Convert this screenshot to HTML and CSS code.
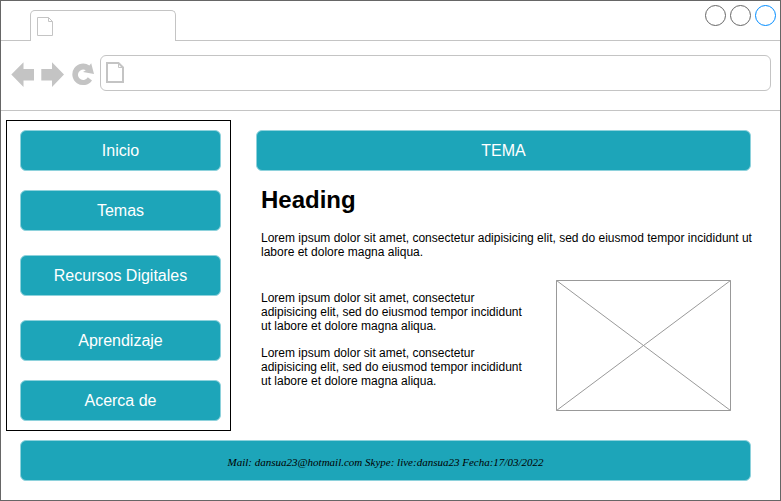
FILE: index.html
```html
<!DOCTYPE html>
<html lang="es">
<head>
<meta charset="utf-8">
<meta name="viewport" content="width=device-width, initial-scale=1">
<title>Tema</title>
<link rel="stylesheet" href="styles.css">
</head>
<body>
<div class="window">
  <header class="tab-strip">
    <div class="tab">
      <svg class="doc-icon" width="16" height="19" viewBox="0 0 16 19" aria-hidden="true">
        <path d="M.5.5H11.500L15.500 4.500V18.500H.5ZM11.500.5V4.500H15.500"/>
      </svg>
    </div>
    <div class="window-controls">
      <button class="control" type="button" aria-label="Minimizar"></button>
      <button class="control" type="button" aria-label="Maximizar"></button>
      <button class="control control-close" type="button" aria-label="Cerrar"></button>
    </div>
  </header>

  <div class="toolbar">
    <button class="tool" type="button" aria-label="Atrás">
      <svg width="24" height="26" viewBox="0 0 24 26" aria-hidden="true"><path d="M.3 12.500 12.500.3V7H23V18.500H12.500V25Z"/></svg>
    </button>
    <button class="tool" type="button" aria-label="Adelante">
      <svg width="24" height="26" viewBox="0 0 24 26" aria-hidden="true"><path d="M23 12.500 11 .3V7H.3V18.500H11V25Z"/></svg>
    </button>
    <button class="tool" type="button" aria-label="Recargar">
      <svg width="24" height="26" viewBox="0 0 24 26" aria-hidden="true"><path d="M21 18.500A10.800 10.800 0 1 1 18.400 3.500L20.200 1.300 23 11.900 12 10 14.800 8.300A5.200 5.200 0 1 0 16.800 15.200Z"/></svg>
    </button>
    <label class="address">
      <svg class="doc-icon" width="18" height="21" viewBox="0 0 18 21" aria-hidden="true">
        <path stroke-width="2" d="M1 1H12.500L17 5.500V20H1Z"/>
        <path d="M12.500 1V5.500H17"/>
      </svg>
      <input class="address-input" type="text" aria-label="Dirección">
    </label>
  </div>

  <div class="page">
    <nav class="menu">
      <a class="bar" href="#inicio">Inicio</a>
      <a class="bar" href="#temas">Temas</a>
      <a class="bar bar-spaced" href="#recursos">Recursos Digitales</a>
      <a class="bar" href="#aprendizaje">Aprendizaje</a>
      <a class="bar" href="#acerca">Acerca de</a>
    </nav>
    <main class="content">
      <div class="bar topic">TEMA</div>
      <h1 class="heading">Heading</h1>
      <p class="text intro">Lorem ipsum dolor sit amet, consectetur adipisicing elit, sed do eiusmod tempor incididunt ut labore et dolore magna aliqua.</p>
      <div class="columns">
        <div class="column-text">
          <p class="text">Lorem ipsum dolor sit amet, consectetur adipisicing elit, sed do eiusmod tempor incididunt ut labore et dolore magna aliqua.</p>
          <p class="text">Lorem ipsum dolor sit amet, consectetur adipisicing elit, sed do eiusmod tempor incididunt ut labore et dolore magna aliqua.</p>
        </div>
        <svg class="picture" viewBox="0 0 175 131" role="img" aria-label="Imagen">
          <path d="M.5.5H174.500V130.500H.5ZM.5.5 174.500 130.500M174.500.5.5 130.500"/>
        </svg>
      </div>
    </main>
  </div>

  <footer class="bar footer">Mail: dansua23@hotmail.com Skype: live:dansua23 Fecha:17/03/2022</footer>
</div>
</body>
</html>
```
FILE: styles.css
```css
* {
  box-sizing: border-box;
}

body {
  margin: 0;
  background: #fff;
  color: #000;
  font-family: "Liberation Sans", Arial, sans-serif;
}

.window {
  min-height: 100vh;
  border: 1px solid #666;
}

.tab-strip {
  display: flex;
  justify-content: space-between;
  height: 40px;
  padding: 0 4px 0 29px;
  border-bottom: 1px solid #c4c4c4;
}

.tab {
  width: 146px;
  height: 31px;
  margin-top: 9px;
  padding: 6px;
  background: #fff;
  border: 1px solid #c4c4c4;
  border-bottom: 0;
  border-radius: 5px 5px 0 0;
}

.doc-icon {
  display: block;
  flex: none;
  fill: none;
  stroke: #c4c4c4;
}

.window-controls {
  display: flex;
  gap: 4px;
  padding-top: 4px;
}

.control {
  width: 21px;
  height: 21px;
  padding: 0;
  background: #fff;
  border: 1px solid #666;
  border-radius: 50%;
}

.control-close {
  border-color: #008cff;
}

.toolbar {
  display: flex;
  align-items: center;
  gap: 6px;
  height: 70px;
  padding: 0 9px 6px 10px;
  border-bottom: 1px solid #c4c4c4;
}

.tool {
  display: block;
  width: 24px;
  height: 26px;
  margin-top: 4px;
  padding: 0;
  background: none;
  border: 0;
  fill: #c4c4c4;
}

.tool svg {
  display: block;
}

.address {
  display: flex;
  flex: 1;
  align-items: center;
  gap: 8px;
  height: 36px;
  margin-left: -1px;
  padding: 0 5px;
  border: 1px solid #c4c4c4;
  border-radius: 6px;
}

.address-input {
  flex: 1;
  min-width: 0;
  padding: 0;
  background: none;
  border: 0;
  outline: 0;
  font: inherit;
}

.page {
  display: grid;
  grid-template-columns: 225px 1fr;
  gap: 25px;
  padding: 9px 19px 9px 5px;
}

.menu {
  display: flex;
  flex-direction: column;
  gap: 19px;
  padding: 9px 9px 9px 13px;
  border: 1px solid #000;
}

.bar {
  display: flex;
  align-items: center;
  justify-content: center;
  height: 41px;
  background: #1da5b9;
  border: 1px solid #8ed2dc;
  border-radius: 6px;
  color: #fff;
  font-size: 16px;
  text-decoration: none;
}

.bar-spaced {
  margin: 5px 0;
}

.topic {
  margin: 10px 10px 0 0;
}

.heading {
  margin: 15px 5px 0;
  font-size: 24px;
  line-height: 28px;
}

.text {
  margin: 0;
  font-size: 12px;
  line-height: 14px;
}

.intro {
  margin: 17px 5px 21px;
}

.columns {
  display: grid;
  grid-template-columns: 1fr 175px;
  gap: 30px;
  padding: 0 30px 0 5px;
}

.column-text {
  display: flex;
  flex-direction: column;
  gap: 13px;
  padding-top: 11px;
}

.picture {
  display: block;
  width: 100%;
  fill: none;
  stroke: #999;
}

.footer {
  margin: 0 29px 19px 19px;
  padding-top: 3px;
  color: #000;
  font-family: "Liberation Serif", "Times New Roman", serif;
  font-size: 11px;
  font-style: italic;
}
```
